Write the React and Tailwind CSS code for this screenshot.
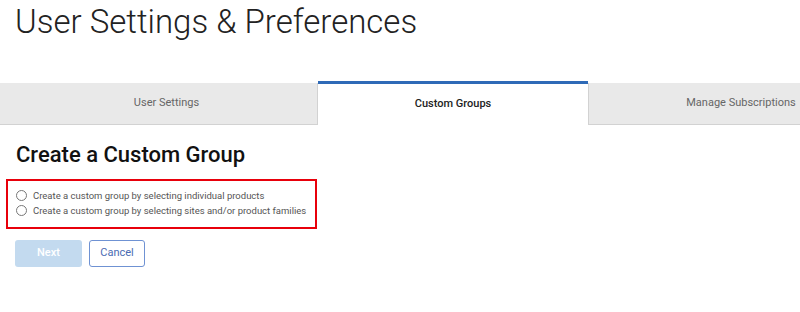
import React from 'react';

const tabs = [
  { label: 'User Settings', cls: 'w-[318px] pl-[16px]', active: false },
  { label: 'Custom Groups', cls: 'w-[270px]', active: true },
  { label: 'Manage Subscriptions', cls: 'w-[306px]', active: false },
];

const options = [
  'Create a custom group by selecting individual products',
  'Create a custom group by selecting sites and/or product families',
];

export default function App() {
  return (
    <div className="w-[800px] h-[312px] overflow-hidden bg-white font-['Roboto',sans-serif]">
      {/* Page title */}
      <h1 className="pl-[15px] pt-[2px] text-[33px] leading-[40px] font-light text-[#222]">
        User Settings &amp; Preferences
      </h1>

      {/* Tabs */}
      <div className="mt-[39px] flex w-[900px] items-end">
        {tabs.map((t) =>
          t.active ? (
            <div
              key={t.label}
              className={`${t.cls} h-[44px] border-t-[3px] border-[#2f6ab7] bg-white flex items-center justify-center text-[11px] font-medium text-[#222]`}
            >
              {t.label}
            </div>
          ) : (
            <div
              key={t.label}
              className={`${t.cls} h-[42px] bg-[#e9e9e9] border-b border-x border-[#d2d2d2] first:border-l-0 flex items-center justify-center text-[11px] text-[#666]`}
            >
              {t.label}
            </div>
          )
        )}
      </div>

      {/* Content */}
      <div className="px-[16px]">
        <h2 className="mt-[17px] text-[22px] leading-[26px] font-medium text-[#111]">
          Create a Custom Group
        </h2>

        <div className="mt-[11px] -ml-[10px] w-[311px] h-[50px] border-2 border-[#e8000b] pl-[8px] pt-[9px] flex flex-col gap-[4px]">
          {options.map((o) => (
            <label key={o} className="flex items-center gap-[6px] whitespace-nowrap text-[9.5px] leading-[11px] text-[#555]">
              <span className="shrink-0 w-[11px] h-[11px] rounded-full border border-[#777] bg-white" />
              {o}
            </label>
          ))}
        </div>

        <div className="mt-[11px] -ml-[1px] flex gap-[7px]">
          <button className="w-[67px] h-[27px] rounded-[3px] bg-[#c3daef] text-white text-[11px] font-medium">
            Next
          </button>
          <button className="w-[56px] h-[27px] rounded-[3px] border border-[#6f92d3] bg-white text-[#4a6cb3] text-[11px]">
            Cancel
          </button>
        </div>
      </div>
    </div>
  );
}
